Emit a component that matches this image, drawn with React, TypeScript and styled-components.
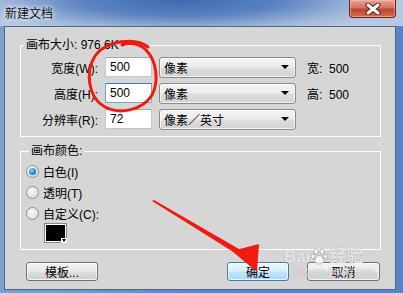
import React from 'react';
import styled, { createGlobalStyle } from 'styled-components';

const GlobalStyle = createGlobalStyle`
    html, body {
        margin: 0;
        padding: 0;
    }
    body {
        width: 403px;
        height: 293px;
        overflow: hidden;
        font-family: "Liberation Sans", "Noto Sans CJK SC", sans-serif;
        font-size: 12px;
        color: #000;
    }
`;

const sizeRows = [
    { label: '宽度(W):', value: '500', unit: '像素', info: '宽:  500', focused: false },
    { label: '高度(H):', value: '500', unit: '像素', info: '高:  500', focused: true },
    { label: '分辨率(R):', value: '72', unit: '像素／英寸', info: '', focused: false },
];

const colorOptions = [
    { label: '白色(I)', checked: true },
    { label: '透明(T)', checked: false },
    { label: '自定义(C):', checked: false },
];

const App: React.FC = () => {
    return (
        <Window>
            <GlobalStyle />
            <TitleBar>
                <Title>新建文档</Title>
                <CloseButton>
                    <svg width="16" height="12" viewBox="0 0 16 12">
                        <path d="M3 2 L13 10 M13 2 L3 10" stroke="#5a1a12" strokeWidth="5" strokeLinecap="round" />
                        <path d="M3 2 L13 10 M13 2 L3 10" stroke="#fff" strokeWidth="3" strokeLinecap="round" />
                    </svg>
                </CloseButton>
            </TitleBar>
            <FrameBody>
                <Client>
                    <GroupBox>
                        <Legend>画布大小: 976.6K</Legend>
                        <Rows>
                            {sizeRows.map((row) => (
                                <SizeRow key={row.label}>
                                    <FieldLabel>{row.label}</FieldLabel>
                                    <TextBox $focused={row.focused}>{row.value}</TextBox>
                                    <Select>
                                        <span>{row.unit}</span>
                                        <Caret />
                                    </Select>
                                    <Info>{row.info}</Info>
                                </SizeRow>
                            ))}
                        </Rows>
                    </GroupBox>
                    <ColorGroup>
                        <Legend>画布颜色:</Legend>
                        <RadioList>
                            {colorOptions.map((opt) => (
                                <RadioRow key={opt.label}>
                                    <Radio $checked={opt.checked} />
                                    <span>{opt.label}</span>
                                </RadioRow>
                            ))}
                            <Swatch>
                                <SwatchArrow />
                            </Swatch>
                        </RadioList>
                    </ColorGroup>
                    <ButtonBar>
                        <Button $width={72}>模板...</Button>
                        <Spacer />
                        <Button $width={62} $default>
                            确定
                        </Button>
                        <Button $width={73}>取消</Button>
                    </ButtonBar>
                </Client>
            </FrameBody>
            <Annotation width="403" height="293" viewBox="0 0 403 293">
                <path
                    d="M148 47 C136 37 106 40 95 56 C85 72 88 98 105 107 C120 115 143 110 152 95 C159 82 157 61 146 50 C140 44 130 42 122 45"
                    fill="none"
                    stroke="#f21a10"
                    strokeWidth="3"
                    strokeLinecap="round"
                />
                <polygon points="152,201 154,200 246,253 243,258" fill="#f21a10" />
                <polygon points="232,251 259,244 257,272" fill="#f21a10" />
            </Annotation>
            <Watermark>
                <WatermarkLogo>
                    Bai
                    <svg width="17" height="17" viewBox="0 0 17 17">
                        <g fill="rgba(255,255,255,0.8)" stroke="rgba(110,110,110,0.5)" strokeWidth="0.8">
                            <ellipse cx="5" cy="3.5" rx="2" ry="2.6" />
                            <ellipse cx="11" cy="3.5" rx="2" ry="2.6" />
                            <ellipse cx="2" cy="8.5" rx="1.8" ry="2.3" />
                            <ellipse cx="14.5" cy="8.5" rx="1.8" ry="2.3" />
                            <path d="M8 7.5 C5 7.5 3 12 4 14.5 C5 16.5 11 16.5 12.5 14.5 C13.5 12 11 7.5 8 7.5 Z" />
                        </g>
                    </svg>
                    经验
                </WatermarkLogo>
                <WatermarkUrl>jingyan.baidu.com</WatermarkUrl>
            </Watermark>
        </Window>
    );
};

const Window = styled.div`
    position: relative;
    width: 403px;
    height: 293px;
    display: flex;
    flex-direction: column;
    background: linear-gradient(90deg, #7e9fd0 0%, #5f86c5 50%, #5a82c4 100%);
    overflow: hidden;
`;

const TitleBar = styled.div`
    height: 26px;
    display: flex;
    justify-content: space-between;
    align-items: flex-start;
    padding-left: 5px;
    background: radial-gradient(ellipse 55% 140% at 45% 0%, #3c69b2 0%, #5c83c2 45%, #9fb7da 80%, #b7c9e2 100%);
`;

const Title = styled.span`
    margin-top: 6px;
    line-height: 16px;
    font-size: 12px;
    color: #111;
    text-shadow: 0 0 4px #fff, 0 0 8px rgba(255, 255, 255, 0.8);
`;

const CloseButton = styled.div`
    width: 45px;
    height: 17px;
    margin-right: 7px;
    display: flex;
    align-items: center;
    justify-content: center;
    border: 1px solid #6b2318;
    border-top: none;
    border-radius: 0 0 4px 4px;
    background: linear-gradient(180deg, #e8a493 0%, #d47563 45%, #c0432c 55%, #d86a4c 100%);
    box-shadow: inset 0 0 0 1px rgba(255, 200, 190, 0.5);
`;

const FrameBody = styled.div`
    flex: 1;
    display: flex;
    padding: 0 7px 3px 4px;
`;

const Client = styled.div`
    flex: 1;
    display: flex;
    flex-direction: column;
    background: #d6d6d6;
    border: 1px solid #4f6584;
    padding-top: 11px;
`;

const GroupBox = styled.fieldset`
    margin: 0 14px 0 15px;
    padding: 5px 0 7px 0;
    border: 1px solid #fff;
    min-width: 0;
`;

const ColorGroup = styled(GroupBox)`
    margin-top: 7px;
    padding: 4px 0 6px 5px;
`;

const Legend = styled.legend`
    margin-left: 3px;
    padding: 0 2px;
    line-height: 14px;
    font-size: 12px;
`;

const Rows = styled.div`
    display: flex;
    flex-direction: column;
    gap: 6px;
`;

const SizeRow = styled.div`
    display: flex;
    align-items: center;
    height: 20px;
`;

const FieldLabel = styled.span`
    width: 77px;
    text-align: right;
`;

const TextBox = styled.div<{ $focused: boolean }>`
    box-sizing: border-box;
    width: 47px;
    height: 20px;
    margin-left: 7px;
    padding-left: 4px;
    line-height: 18px;
    background: #fff;
    border: 1px solid ${(p) => (p.$focused ? '#6fa6d8' : '#c5c7cc')};
    border-top-color: ${(p) => (p.$focused ? '#3d7bbf' : '#a5a8ad')};
`;

const Select = styled.div`
    box-sizing: border-box;
    width: 137px;
    height: 21px;
    margin-left: 7px;
    padding: 0 6px 0 4px;
    display: flex;
    align-items: center;
    justify-content: space-between;
    border: 1px solid #8a8a8a;
    border-radius: 3px;
    background: linear-gradient(180deg, #f4f4f4 0%, #ececec 48%, #dedede 52%, #d2d2d2 100%);
    box-shadow: inset 0 0 0 1px rgba(255, 255, 255, 0.7);
`;

const Caret = styled.span`
    width: 0;
    height: 0;
    border-left: 4px solid transparent;
    border-right: 4px solid transparent;
    border-top: 4px solid #000;
`;

const Info = styled.span`
    margin-left: 11px;
    white-space: pre;
`;

const RadioList = styled.div`
    display: flex;
    flex-direction: column;
    gap: 3px;
`;

const RadioRow = styled.div`
    display: flex;
    align-items: center;
    gap: 4px;
    height: 18px;
`;

const Radio = styled.span<{ $checked: boolean }>`
    position: relative;
    box-sizing: border-box;
    width: 13px;
    height: 13px;
    border-radius: 50%;
    border: 1px solid #8e8f8f;
    background: radial-gradient(circle at 40% 35%, #fdfdfd 0%, #e3e3e3 60%, #cfcfcf 100%);

    &::after {
        content: '';
        display: ${(p) => (p.$checked ? 'block' : 'none')};
        position: absolute;
        left: 2px;
        top: 2px;
        width: 7px;
        height: 7px;
        border-radius: 50%;
        background: radial-gradient(circle at 40% 35%, #8fd3ff 0%, #1c8ad8 55%, #0d4f8f 100%);
    }
`;

const Swatch = styled.div`
    position: relative;
    box-sizing: border-box;
    width: 23px;
    height: 20px;
    margin: -2px 0 0 18px;
    border: 1px solid #888;
    outline: 1px solid #fff;
    outline-offset: -2px;
    background: #000;
`;

const SwatchArrow = styled.span`
    position: absolute;
    right: -1px;
    bottom: -1px;
    width: 6px;
    height: 5px;
    background: #fff;

    &::after {
        content: '';
        position: absolute;
        left: 1px;
        top: 1px;
        border-left: 2px solid transparent;
        border-right: 2px solid transparent;
        border-top: 3px solid #000;
    }
`;

const ButtonBar = styled.div`
    display: flex;
    align-items: center;
    margin: 12px 15px 0 21px;
    gap: 18px;
`;

const Spacer = styled.div`
    flex: 1;
`;

const Button = styled.div<{ $width: number; $default?: boolean }>`
    box-sizing: border-box;
    width: ${(p) => p.$width}px;
    height: 19px;
    display: flex;
    align-items: center;
    justify-content: center;
    font-size: 12px;
    border: 1px solid ${(p) => (p.$default ? '#3c7fb1' : '#707070')};
    border-radius: 3px;
    background: ${(p) =>
        p.$default
            ? 'linear-gradient(180deg, #eaf6fd 0%, #d9f0fc 48%, #bee6fd 52%, #a7d9f5 100%)'
            : 'linear-gradient(180deg, #f2f2f2 0%, #ebebeb 48%, #dddddd 52%, #cfcfcf 100%)'};
    box-shadow: inset 0 0 0 1px rgba(255, 255, 255, 0.75);
`;

const Annotation = styled.svg`
    position: absolute;
    left: 0;
    top: 0;
    pointer-events: none;
`;

const Watermark = styled.div`
    position: absolute;
    left: 284px;
    top: 247px;
    display: flex;
    flex-direction: column;
    align-items: flex-start;
    color: rgba(255, 255, 255, 0.75);
    text-shadow: 0 0 1px rgba(100, 100, 100, 0.6);
    pointer-events: none;
`;

const WatermarkLogo = styled.span`
    display: flex;
    align-items: center;
    gap: 1px;
    font-family: "Liberation Sans", "Noto Sans CJK SC", sans-serif;
    font-size: 17px;
    font-weight: bold;
    line-height: 19px;
`;

const WatermarkUrl = styled.span`
    margin-left: 10px;
    font-size: 10px;
    line-height: 11px;
`;

export default App;
